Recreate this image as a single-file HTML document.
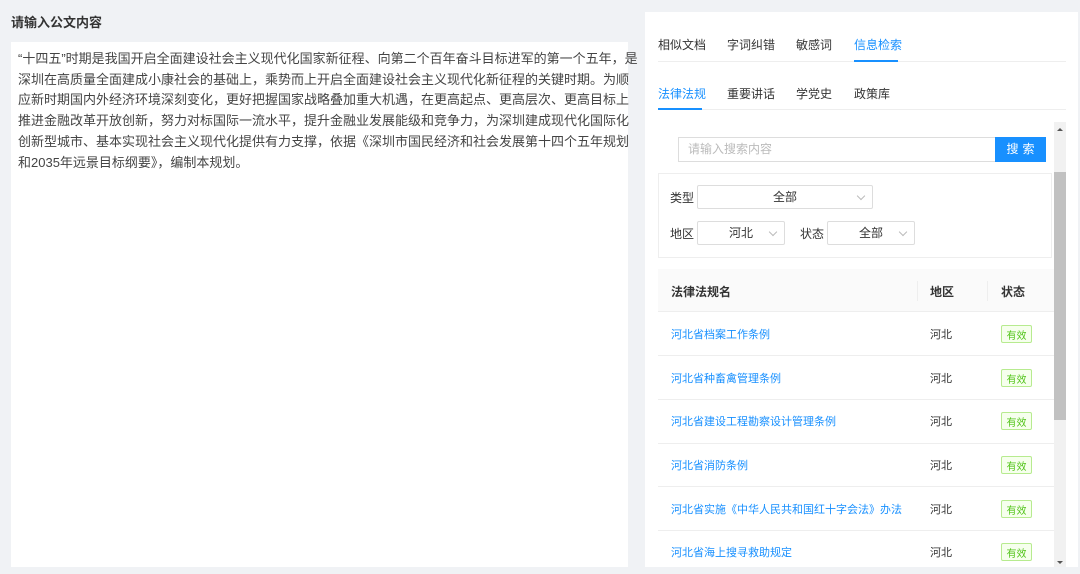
<!DOCTYPE html><html><head><meta charset="utf-8"><style>
*{margin:0;padding:0;box-sizing:border-box}
html,body{width:1080px;height:567px}
body{background:#f0f2f5;font-family:"Liberation Sans","Noto Sans CJK SC",sans-serif;position:relative;overflow:hidden;color:#333}
.a{position:absolute}
.title{left:11px;top:12px;font-size:13px;font-weight:bold;color:#333}
.left{left:11px;top:42px;width:617px;height:525px;background:#fff}
.txt{position:absolute;left:7px;top:7px;font-size:13px;line-height:20.7px;color:#444;white-space:nowrap}
.right{left:645px;top:12px;width:433px;height:555px;background:#fff}
.tab{font-size:12px;color:#333}
.blue{color:#1890ff}
.sel{border:1px solid #ddd;border-radius:2px;background:#fff;font-size:12px;text-align:center;line-height:22px;color:#333}
.sel i{position:absolute;right:8px;top:7px;width:6px;height:6px;border-right:1px solid #bbb;border-bottom:1px solid #bbb;transform:rotate(45deg)}
.row{left:658px;width:396px;height:44px;border-bottom:1px solid #eee;font-size:11px}
.tag{position:absolute;left:343px;top:13px;width:31px;height:18px;border:1px solid #b7eb8f;background:#f6ffed;color:#52c41a;font-size:10px;display:flex;align-items:center;justify-content:center;border-radius:2px}
</style></head><body>
<div class="a title">请输入公文内容</div>
<div class="a left"><div class="txt">“十四五”时期是我国开启全面建设社会主义现代化国家新征程、向第二个百年奋斗目标进军的第一个五年，是<br>深圳在高质量全面建成小康社会的基础上，乘势而上开启全面建设社会主义现代化新征程的关键时期。为顺<br>应新时期国内外经济环境深刻变化，更好把握国家战略叠加重大机遇，在更高起点、更高层次、更高目标上<br>推进金融改革开放创新，努力对标国际一流水平，提升金融业发展能级和竞争力，为深圳建成现代化国际化<br>创新型城市、基本实现社会主义现代化提供有力支撑，依据《深圳市国民经济和社会发展第十四个五年规划<br>和2035年远景目标纲要》，编制本规划。</div></div>
<div class="a right"></div>
<div class="a tab" style="left:658px;top:36px">相似文档</div>
<div class="a tab" style="left:727px;top:36px">字词纠错</div>
<div class="a tab" style="left:796px;top:36px">敏感词</div>
<div class="a tab blue" style="left:854px;top:36px">信息检索</div>
<div class="a" style="left:658px;top:61px;width:408px;height:1px;background:#eee"></div>
<div class="a" style="left:854px;top:60px;width:44px;height:2px;background:#1890ff"></div>
<div class="a tab blue" style="left:658px;top:85px">法律法规</div>
<div class="a tab" style="left:727px;top:85px">重要讲话</div>
<div class="a tab" style="left:796px;top:85px">学党史</div>
<div class="a tab" style="left:854px;top:85px">政策库</div>
<div class="a" style="left:658px;top:109px;width:408px;height:1px;background:#eee"></div>
<div class="a" style="left:658px;top:108px;width:44px;height:2px;background:#1890ff"></div>
<div class="a" style="left:1054px;top:122px;width:12px;height:445px;background:#f1f1f1"></div>
<div class="a" style="left:1054px;top:172px;width:12px;height:248px;background:#c1c1c1"></div>
<div class="a" style="left:1057px;top:128px;border-left:3px solid transparent;border-right:3px solid transparent;border-bottom:3px solid #555"></div>
<div class="a" style="left:1057px;top:561px;border-left:3px solid transparent;border-right:3px solid transparent;border-top:3px solid #555"></div>
<div class="a" style="left:678px;top:137px;width:318px;height:25px;border:1px solid #ddd;font-size:12px;color:#bbb;padding-left:9px;line-height:23px">请输入搜索内容</div>
<div class="a" style="left:995px;top:137px;width:51px;height:25px;background:#1890ff;color:#fff;font-size:12px;text-align:center;line-height:25px;letter-spacing:4px;padding-left:4px">搜索</div>
<div class="a" style="left:658px;top:173px;width:394px;height:85px;border:1px solid #eee"></div>
<div class="a tab" style="left:670px;top:189px">类型</div>
<div class="a sel" style="left:697px;top:185px;width:176px;height:24px">全部<i></i></div>
<div class="a tab" style="left:670px;top:225px">地区</div>
<div class="a sel" style="left:697px;top:221px;width:88px;height:24px">河北<i></i></div>
<div class="a tab" style="left:800px;top:225px">状态</div>
<div class="a sel" style="left:827px;top:221px;width:88px;height:24px">全部<i></i></div>
<div class="a" style="left:658px;top:269px;width:396px;height:43px;background:#fafafa;border-bottom:1px solid #eee;font-size:12px;font-weight:bold">
<span class="a" style="left:13px;top:14px">法律法规名</span><span class="a" style="left:259px;top:12px;width:1px;height:20px;background:#eee"></span><span class="a" style="left:272px;top:14px">地区</span><span class="a" style="left:329px;top:12px;width:1px;height:20px;background:#eee"></span><span class="a" style="left:343px;top:14px">状态</span></div>
<div class="a row" style="top:312px"><span class="a blue" style="left:13px;top:14px">河北省档案工作条例</span><span class="a" style="left:272px;top:14px">河北</span><span class="tag">有效</span></div>
<div class="a row" style="top:356px"><span class="a blue" style="left:13px;top:14px">河北省种畜禽管理条例</span><span class="a" style="left:272px;top:14px">河北</span><span class="tag">有效</span></div>
<div class="a row" style="top:400px"><span class="a blue" style="left:13px;top:13px">河北省建设工程勘察设计管理条例</span><span class="a" style="left:272px;top:13px">河北</span><span class="tag" style="top:12px">有效</span></div>
<div class="a row" style="top:443px"><span class="a blue" style="left:13px;top:14px">河北省消防条例</span><span class="a" style="left:272px;top:14px">河北</span><span class="tag">有效</span></div>
<div class="a row" style="top:487px"><span class="a blue" style="left:13px;top:14px">河北省实施《中华人民共和国红十字会法》办法</span><span class="a" style="left:272px;top:14px">河北</span><span class="tag">有效</span></div>
<div class="a row" style="top:530px;border:none"><span class="a blue" style="left:13px;top:14px">河北省海上搜寻救助规定</span><span class="a" style="left:272px;top:14px">河北</span><span class="tag">有效</span></div>
</body></html>
